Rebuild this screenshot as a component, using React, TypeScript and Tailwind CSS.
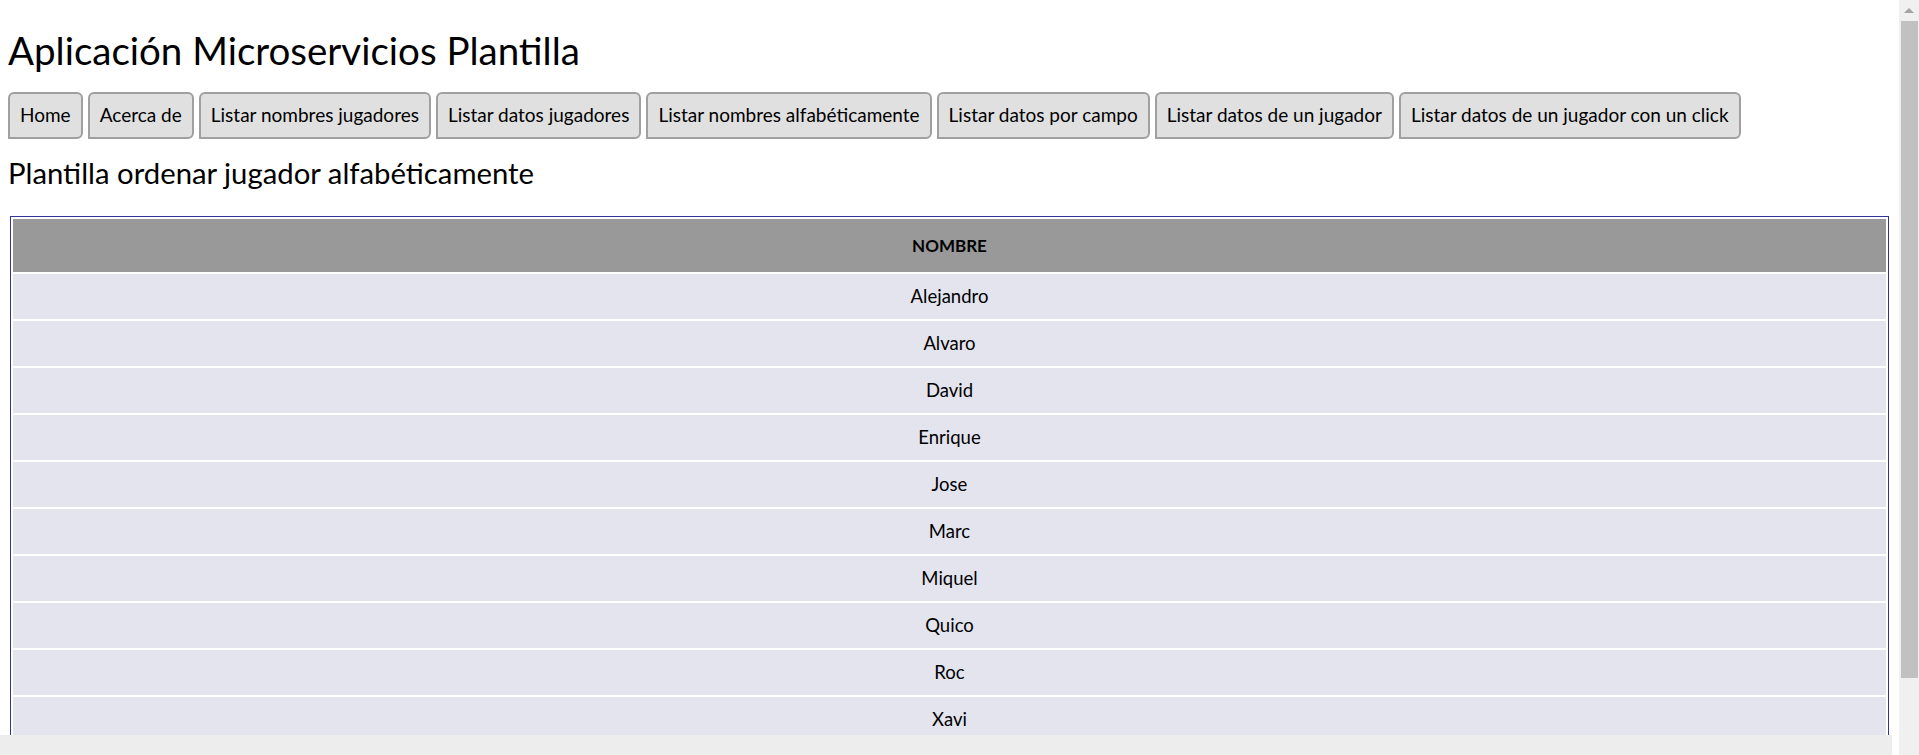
import React from "react";

const buttons = [
  "Home",
  "Acerca de",
  "Listar nombres jugadores",
  "Listar datos jugadores",
  "Listar nombres alfabéticamente",
  "Listar datos por campo",
  "Listar datos de un jugador",
  "Listar datos de un jugador con un click",
];

const names = ["Alejandro", "Alvaro", "David", "Enrique", "Jose", "Marc", "Miquel", "Quico", "Roc", "Xavi"];

export default function App() {
  return (
    <div
      className="flex h-[755px] w-full overflow-hidden bg-white text-black"
      style={{ fontFamily: "Lato, 'Noto Sans', sans-serif" }}
    >
      <div className="flex min-w-0 flex-1 flex-col">
        <div className="min-h-0 flex-1 overflow-hidden px-[8px]">
          <h1 className="mt-[27px] text-[38.5px] leading-[46px] font-normal">Aplicación Microservicios Plantilla</h1>
          <div className="mt-[19px] flex gap-[5px]">
            {buttons.map((b) => (
              <button
                key={b}
                className="h-[47px] rounded-[6px] rounded-bl-none border-2 border-[#a0a0a0] bg-[#e0e0e0] px-[10px] text-[19px] text-black"
              >
                {b}
              </button>
            ))}
          </div>
          <h2 className="mt-[14px] text-[29.3px] leading-[40px] font-normal">Plantilla ordenar jugador alfabéticamente</h2>
          <table className="mx-[2px] mt-[23px] w-[calc(100%-4px)] border-separate border-spacing-[2px] border border-[#333399]">
            <thead>
              <tr>
                <th className="h-[53px] bg-[#999999] text-center text-[17px] font-bold">NOMBRE</th>
              </tr>
            </thead>
            <tbody>
              {names.map((n) => (
                <tr key={n}>
                  <td className="h-[45px] bg-[#e4e4ee] text-center text-[18.5px]">{n}</td>
                </tr>
              ))}
            </tbody>
          </table>
        </div>
        <div className="flex h-[20px] shrink-0">
          <div className="w-[1892px] bg-[#ededed]" />
          <div className="flex-1 bg-white" />
        </div>
      </div>
      <div className="flex w-[20px] shrink-0 flex-col items-center bg-[#f0f0f0]">
        <div className="flex h-[21px] items-center justify-center">
          <svg width="10" height="6" viewBox="0 0 10 6">
            <polygon points="5,0 10,5 0,5" fill="#a3a3a3" />
          </svg>
        </div>
        <div className="h-[657px] w-[17px] bg-[#c1c1c1]" />
      </div>
    </div>
  );
}
